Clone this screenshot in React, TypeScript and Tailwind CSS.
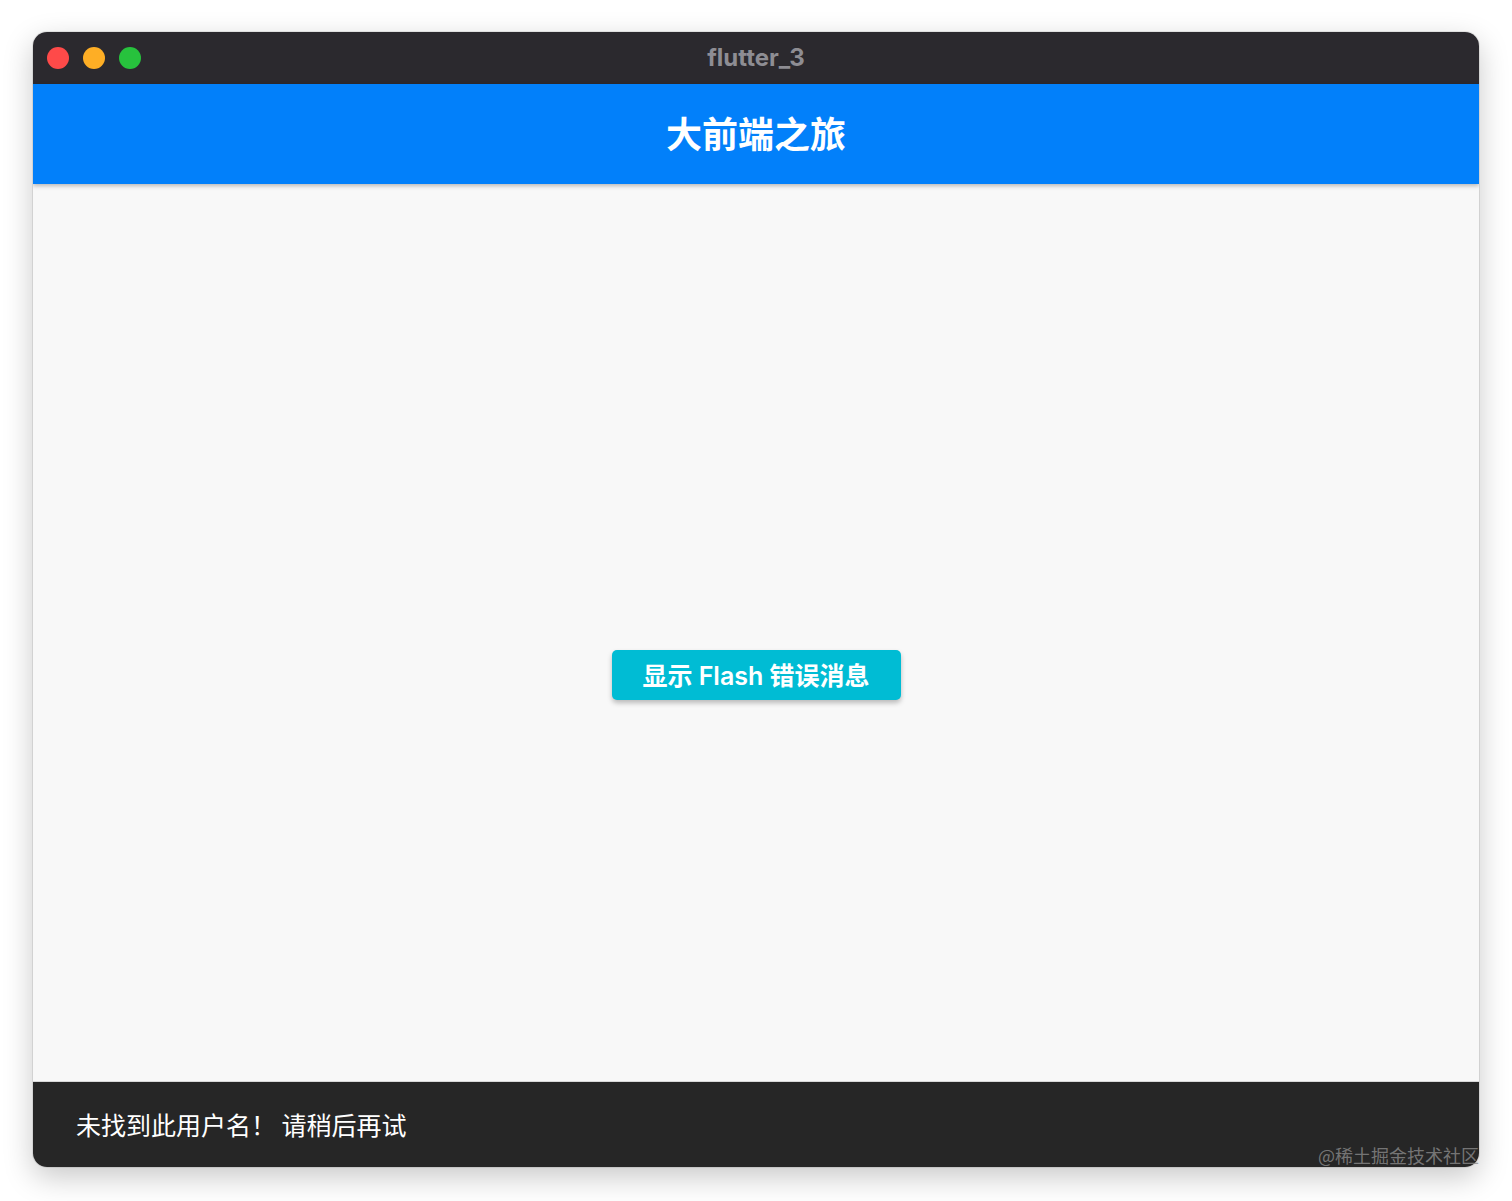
export default function App() {
  return (
    <div className="relative min-h-[1201px] bg-white pl-[33px] pr-[33px] pt-[32px] font-['Noto_Sans_CJK_SC',sans-serif]">
      <div className="flex h-[1135px] w-[1446px] flex-col overflow-hidden rounded-[14px] shadow-[0_10px_30px_rgba(0,0,0,0.22),0_0_0_1px_rgba(0,0,0,0.08)]">
        <TitleBar />
        <div className="relative z-10 flex h-[100px] items-center justify-center bg-[#0280fa] pb-[4px] shadow-[0_2px_4px_rgba(0,0,0,0.25)]">
          <span className="text-[36px] font-bold leading-none text-white">大前端之旅</span>
        </div>
        <div className="flex flex-1 items-center justify-center bg-[#f8f8f8]">
          <button className="mt-[84px] flex h-[50px] w-[289px] items-center justify-center rounded-[5px] bg-[#00bcd4] pt-[5px] font-['Inter','Noto_Sans_CJK_SC',sans-serif] text-[25px] font-semibold text-white shadow-[0_3px_5px_rgba(0,0,0,0.25)]">
            显示 Flash 错误消息
          </button>
        </div>
        <div className="flex h-[86px] items-center border-t border-[#d8d8d8] bg-[#262626] pl-[43px]">
          <span className="text-[25px] leading-none text-white">未找到此用户名！ 请稍后再试</span>
        </div>
      </div>
      <div className="absolute left-[1318px] top-[1146px] text-[18px] leading-none text-[#8a8a8a]/80">@稀土掘金技术社区</div>
    </div>
  );
}

function TitleBar() {
  return (
    <div className="relative flex h-[52px] items-center bg-[#2b292e] pl-[14px]">
      <div className="flex gap-[14px]">
        <span className="h-[22px] w-[22px] rounded-full bg-[#fe4a49]" />
        <span className="h-[22px] w-[22px] rounded-full bg-[#feae25]" />
        <span className="h-[22px] w-[22px] rounded-full bg-[#27c23d]" />
      </div>
      <div className="absolute inset-0 flex items-center justify-center">
        <span className="font-['Inter',sans-serif] text-[24px] font-bold text-[#8e8d93]">flutter_3</span>
      </div>
    </div>
  );
}
